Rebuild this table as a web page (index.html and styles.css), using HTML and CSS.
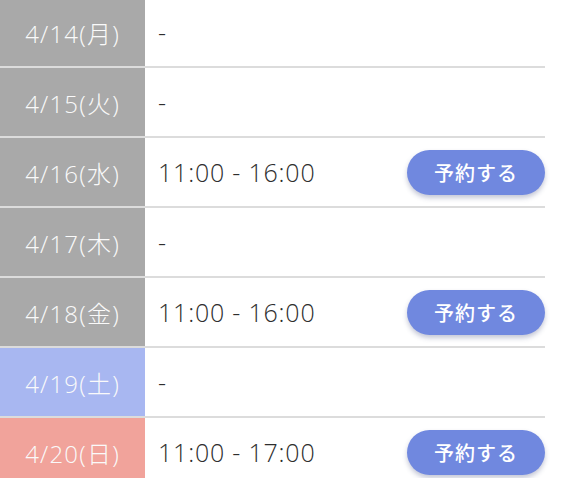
FILE: index.html
```html
<!DOCTYPE html>
<html lang="ja">
<head>
<meta charset="utf-8">
<link rel="stylesheet" href="styles.css">
</head>
<body>
<div class="table">
  <div class="row"><div class="date gray">4/14(月)</div><div class="cell"><span class="time">-</span></div></div>
  <div class="row"><div class="date gray">4/15(火)</div><div class="cell"><span class="time">-</span></div></div>
  <div class="row"><div class="date gray">4/16(水)</div><div class="cell"><span class="time">11:00 - 16:00</span><button class="btn">予約する</button></div></div>
  <div class="row"><div class="date gray">4/17(木)</div><div class="cell"><span class="time">-</span></div></div>
  <div class="row"><div class="date gray">4/18(金)</div><div class="cell"><span class="time">11:00 - 16:00</span><button class="btn">予約する</button></div></div>
  <div class="row"><div class="date sat">4/19(土)</div><div class="cell"><span class="time">-</span></div></div>
  <div class="row"><div class="date sun">4/20(日)</div><div class="cell"><span class="time">11:00 - 17:00</span><button class="btn">予約する</button></div></div>
</div>
</body>
</html>
```

FILE: styles.css
```css
html, body {
  margin: 0;
  padding: 0;
  background: #fff;
}
body {
  font-family: "Open Sans", "Noto Sans CJK JP", sans-serif;
  overflow: hidden;
}
.table {
  width: 545px;
  margin-top: -4px;
  display: flex;
  flex-direction: column;
}
.row {
  display: flex;
  height: 68px;
  border-top: 2px solid #dcdcdc;
}
.date {
  width: 145px;
  flex: none;
  display: flex;
  align-items: center;
  justify-content: center;
  color: #fafafa;
  font-size: 24px;
  font-weight: 300;
  letter-spacing: 1.2px;
}
.gray { background: #a9a9a9; }
.sat { background: #a8b7f1; }
.sun { background: #f1a39b; }
.cell {
  flex: 1;
  display: flex;
  align-items: center;
  justify-content: space-between;
  padding-left: 13px;
}
.time {
  font-size: 25px;
  font-weight: 300;
  color: #2e2e2e;
  letter-spacing: 0.8px;
}
.btn {
  width: 138px;
  height: 45px;
  border: none;
  border-radius: 23px;
  background: #7088df;
  color: #fff;
  font-family: "Noto Sans CJK JP", sans-serif;
  font-size: 20px;
  font-weight: 500;
  letter-spacing: 1px;
  box-shadow: 0 3px 5px rgba(60, 70, 120, 0.3);
  padding: 0;
}
```
